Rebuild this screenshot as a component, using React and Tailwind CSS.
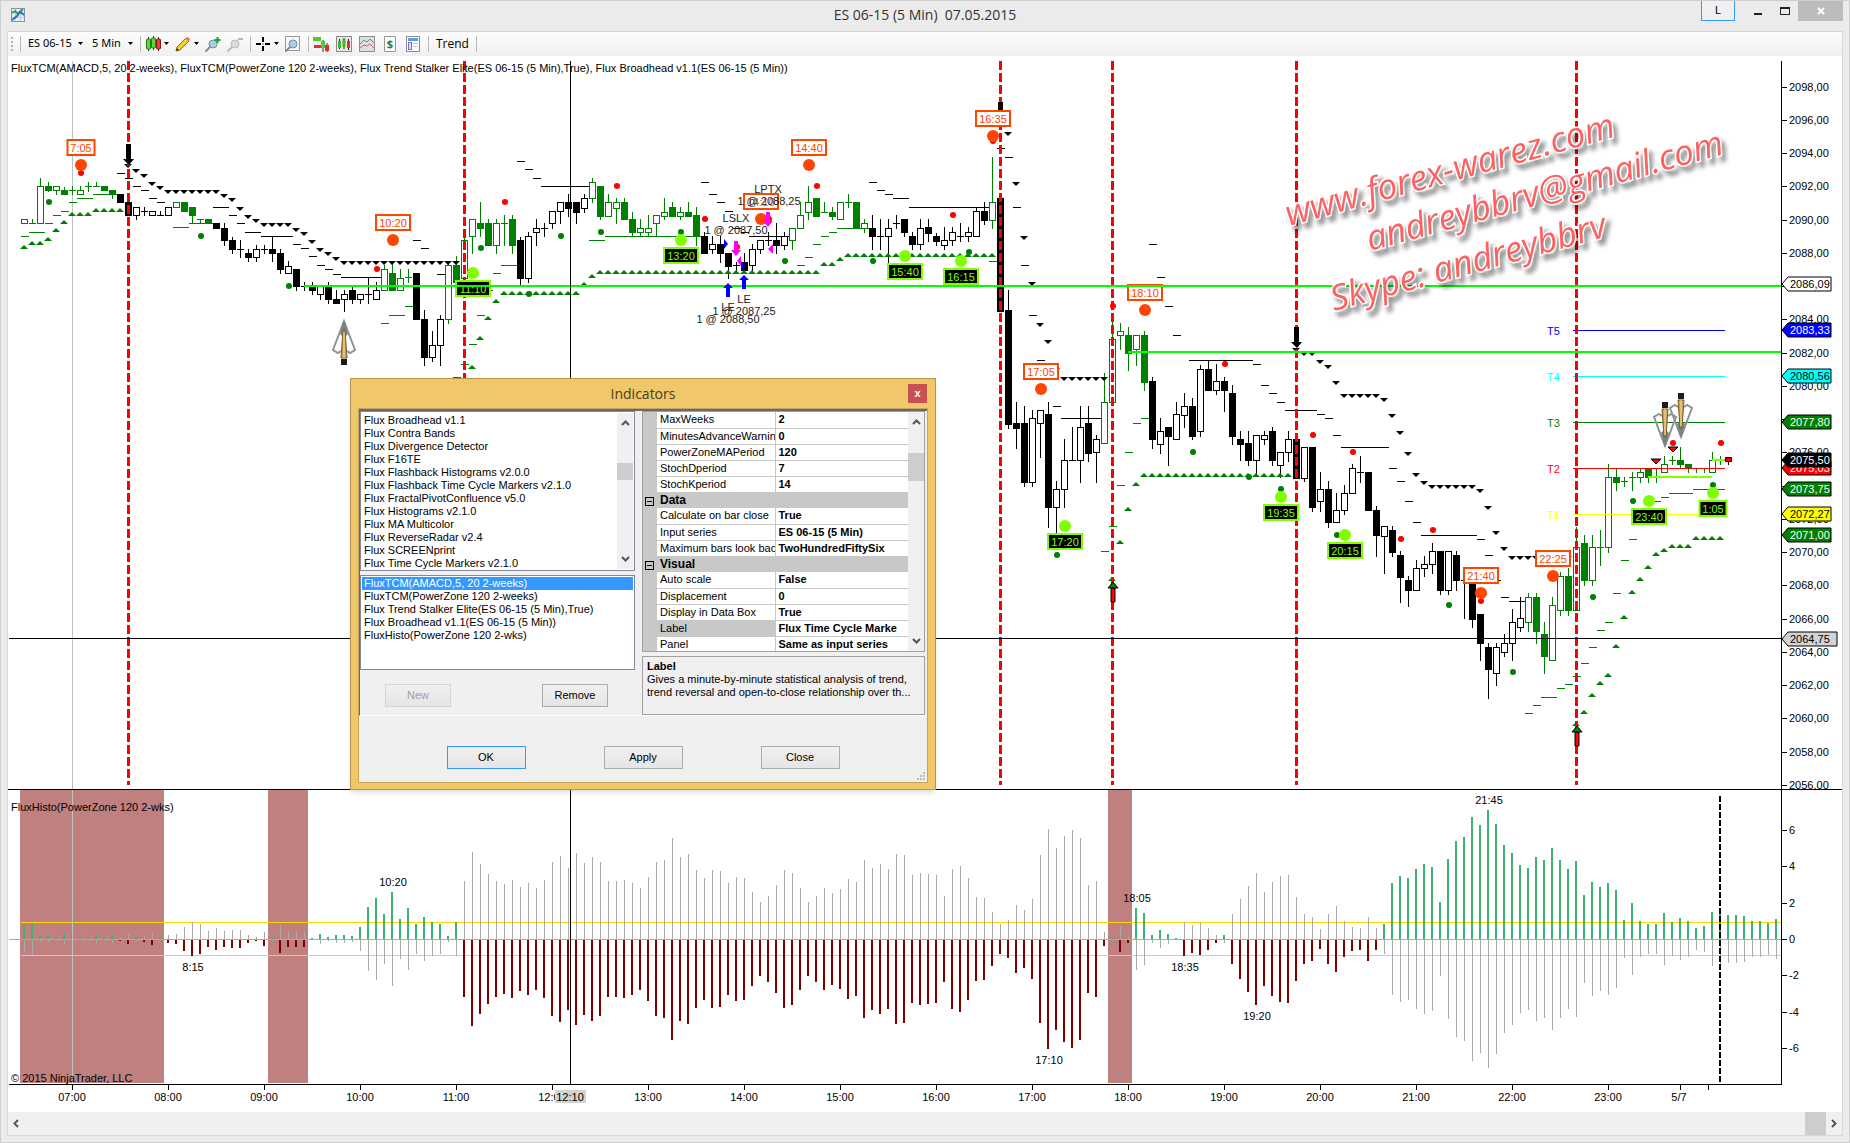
import { useState } from "react";

// -------------------------------------------------
// Chart geometry
// -------------------------------------------------
const FIRST_BAR = 24;
const BAR_STEP = 8;
const ZERO_Y = 939;

const barX = (i) => FIRST_BAR + i * BAR_STEP;

// one candle per 5 minutes: [high, body top, body bottom, low, kind]
// g = green hollow, G = green filled, w = black hollow, b = black filled
const candles = [
  [219, 219, 223, 223, "g"], [219, 223, 223, 223, "g"], [178, 186, 223, 223, "g"], [182, 186, 190, 191, "G"],
  [186, 186, 190, 194, "g"], [187, 190, 194, 194, "G"], [186, 190, 190, 194, "g"], [186, 190, 194, 194, "g"],
  [182, 186, 186, 191, "g"], [182, 186, 186, 186, "g"], [186, 186, 190, 190, "G"], [190, 190, 194, 198, "G"],
  [194, 194, 202, 202, "b"], [202, 202, 215, 215, "b"], [207, 207, 215, 219, "w"], [207, 211, 211, 215, "w"],
  [211, 211, 215, 215, "w"], [211, 215, 215, 215, "w"], [207, 207, 215, 215, "w"], [202, 202, 207, 207, "g"],
  [202, 202, 211, 211, "G"], [207, 207, 215, 223, "G"], [219, 219, 219, 223, "g"], [219, 219, 223, 223, "G"],
  [223, 223, 228, 228, "b"], [223, 228, 240, 245, "b"], [237, 240, 249, 253, "b"], [240, 249, 249, 257, "w"],
  [249, 253, 257, 261, "b"], [245, 249, 257, 261, "w"], [245, 249, 249, 253, "w"], [237, 249, 253, 261, "b"],
  [249, 253, 269, 273, "b"], [261, 266, 273, 273, "w"], [269, 269, 286, 290, "b"], [282, 286, 286, 290, "w"],
  [282, 286, 290, 294, "b"], [286, 286, 294, 299, "w"], [282, 286, 299, 303, "b"], [290, 299, 303, 303, "b"],
  [290, 294, 299, 311, "w"], [286, 290, 299, 303, "b"], [294, 294, 299, 303, "w"], [278, 294, 294, 303, "w"],
  [282, 290, 299, 299, "w"], [265, 269, 290, 290, "g"], [262, 273, 290, 290, "G"], [269, 278, 290, 290, "g"],
  [269, 277, 277, 282, "g"], [273, 273, 319, 319, "b"], [310, 319, 357, 365, "b"], [331, 345, 357, 361, "w"],
  [315, 319, 345, 365, "w"], [262, 265, 319, 323, "g"], [256, 265, 282, 282, "G"], [236, 240, 278, 278, "g"],
  [219, 219, 236, 253, "g"], [202, 223, 228, 236, "G"], [219, 223, 245, 245, "G"], [219, 223, 245, 253, "g"],
  [215, 223, 223, 245, "g"], [215, 219, 245, 253, "G"], [237, 240, 278, 286, "b"], [232, 236, 278, 282, "w"],
  [219, 228, 232, 245, "w"], [223, 228, 228, 236, "w"], [211, 211, 223, 228, "w"], [202, 202, 211, 223, "w"],
  [194, 202, 208, 216, "b"], [202, 202, 212, 223, "b"], [194, 198, 208, 212, "w"], [178, 182, 198, 202, "g"],
  [186, 186, 216, 219, "G"], [194, 202, 216, 216, "g"], [198, 202, 208, 223, "g"], [198, 202, 219, 219, "G"],
  [212, 219, 232, 236, "G"], [219, 228, 232, 236, "g"], [215, 228, 232, 236, "g"], [215, 215, 223, 236, "g"],
  [198, 212, 216, 219, "g"], [202, 207, 216, 216, "G"], [207, 212, 216, 219, "g"], [202, 212, 216, 216, "G"],
  [207, 215, 236, 245, "G"], [232, 236, 253, 253, "b"], [236, 244, 249, 253, "w"], [236, 244, 253, 262, "b"],
  [253, 253, 266, 278, "b"], [262, 265, 265, 273, "w"], [253, 262, 270, 270, "b"], [244, 249, 265, 270, "w"],
  [240, 240, 249, 253, "w"], [232, 240, 240, 245, "w"], [223, 240, 245, 253, "b"], [232, 236, 245, 249, "w"],
  [228, 228, 240, 249, "g"], [202, 215, 228, 228, "g"], [186, 202, 212, 219, "g"], [198, 198, 216, 216, "G"],
  [202, 212, 212, 212, "g"], [207, 212, 216, 219, "G"], [202, 202, 219, 219, "g"], [194, 202, 202, 207, "g"],
  [202, 202, 228, 228, "G"], [219, 223, 228, 232, "g"], [215, 228, 236, 249, "b"], [219, 236, 236, 249, "w"],
  [219, 228, 236, 262, "w"], [215, 223, 223, 228, "w"], [219, 219, 232, 236, "b"], [232, 236, 244, 249, "b"],
  [219, 228, 244, 249, "w"], [219, 227, 233, 241, "b"], [233, 236, 241, 245, "b"], [227, 240, 245, 249, "w"],
  [227, 232, 240, 245, "w"], [223, 236, 236, 241, "w"], [227, 232, 236, 241, "w"], [208, 211, 236, 236, "w"],
  [202, 211, 220, 224, "b"], [157, 202, 220, 228, "g"], [198, 198, 311, 311, "b"], [290, 310, 424, 428, "b"],
  [402, 423, 428, 448, "b"], [406, 423, 482, 486, "b"], [410, 418, 482, 486, "w"], [410, 410, 423, 457, "w"],
  [402, 414, 507, 527, "b"], [481, 489, 507, 532, "w"], [439, 460, 489, 507, "w"], [427, 460, 460, 460, "w"],
  [406, 427, 460, 482, "w"], [406, 423, 453, 461, "b"], [435, 439, 452, 482, "w"], [373, 402, 443, 443, "g"],
  [319, 339, 402, 402, "g"], [323, 331, 335, 349, "g"], [327, 335, 353, 370, "G"], [335, 335, 349, 365, "g"],
  [331, 335, 382, 390, "G"], [377, 381, 439, 448, "b"], [418, 431, 444, 453, "w"], [427, 427, 436, 465, "b"],
  [402, 414, 439, 439, "w"], [393, 406, 415, 427, "w"], [398, 406, 436, 439, "b"], [365, 369, 431, 436, "w"],
  [361, 369, 390, 390, "b"], [364, 381, 390, 394, "w"], [377, 381, 390, 411, "b"], [385, 393, 436, 444, "b"],
  [431, 439, 444, 460, "b"], [431, 443, 460, 465, "b"], [435, 435, 460, 473, "w"], [431, 435, 439, 444, "w"],
  [427, 431, 460, 465, "b"], [452, 452, 465, 477, "w"], [431, 439, 452, 461, "w"], [439, 439, 478, 478, "b"],
  [447, 447, 478, 481, "w"], [447, 447, 507, 511, "b"], [472, 489, 501, 511, "w"], [481, 489, 522, 527, "b"],
  [493, 510, 522, 522, "w"], [485, 493, 510, 514, "w"], [464, 468, 493, 493, "w"], [456, 472, 472, 482, "w"],
  [472, 472, 510, 510, "b"], [506, 510, 535, 556, "b"], [526, 526, 536, 573, "w"], [526, 530, 552, 556, "b"],
  [551, 555, 577, 602, "b"], [576, 580, 590, 606, "b"], [560, 568, 590, 590, "w"], [556, 564, 568, 576, "w"],
  [543, 551, 564, 573, "w"], [551, 551, 590, 594, "b"], [551, 551, 590, 594, "w"], [551, 555, 580, 590, "b"],
  [580, 580, 580, 618, "w"], [580, 580, 619, 627, "b"], [614, 614, 643, 660, "b"], [643, 647, 669, 698, "b"],
  [643, 647, 673, 685, "w"], [634, 643, 652, 656, "w"], [609, 622, 643, 660, "w"], [597, 618, 627, 631, "w"],
  [593, 597, 622, 631, "g"], [593, 597, 631, 643, "G"], [622, 634, 656, 673, "G"], [597, 605, 660, 660, "g"],
  [572, 576, 610, 615, "g"], [568, 576, 610, 615, "G"], [527, 547, 610, 610, "g"], [535, 543, 580, 585, "G"],
  [535, 547, 580, 585, "g"], [530, 547, 547, 565, "g"], [464, 477, 547, 552, "g"], [468, 477, 482, 490, "G"],
  [477, 481, 481, 486, "g"], [472, 477, 477, 490, "g"], [468, 472, 477, 482, "g"], [468, 468, 477, 482, "G"],
  [468, 477, 477, 482, "g"], [456, 464, 472, 472, "g"], [456, 460, 460, 464, "g"], [447, 460, 464, 468, "G"],
  [464, 464, 468, 472, "G"], [468, 468, 468, 472, "g"], [468, 468, 468, 472, "g"], [452, 460, 472, 472, "g"],
  [456, 460, 460, 464, "g"],
];

// histogram height of every bar, negative ones hang below zero
const histogram = [
  14, 16, 3, 3, 2, 5, 4, 1, 2, 4, 2, 4, -2, -5, 2, -3, -6, 1, -4, -5,
  -12, -17, -15, -8, -11, -8, -9, -9, -4, -2, -7, 2, -14, -8, -8, -8, 1, 5, 2, 4,
  4, 3, 12, 32, 41, 25, 47, 20, 31, 15, 22, 17, 15, 3, 17, -58, -87, -75, -65, -58,
  -55, -59, -52, -56, -51, -59, -77, -83, -71, -86, -76, -82, -77, -58, -58, -59, -56, -51, -62, -77,
  -79, -101, -82, -85, -69, -61, -69, -68, -56, -62, -61, -47, -37, -43, -54, -69, -66, -51, -37, -43,
  -51, -46, -50, -60, -57, -79, -71, -75, -70, -85, -84, -64, -66, -65, -64, -43, -70, -73, -61, -42,
  -41, -27, -15, -19, -34, -29, -40, -84, -110, -91, -103, -109, -101, -54, -58, -7, 2, -13, -4, 31,
  26, 4, 9, 5, 1, -17, -14, -16, -11, -4, 4, -25, -40, -53, -66, -47, -57, -63, -64, -42,
  -25, -22, -10, -25, -33, -18, -12, -11, -22, -11, 15, 56, 63, 61, 70, 75, 72, 37, 80, 98,
  102, 122, 114, 129, 115, 94, 86, 74, 71, 82, 79, 91, 79, 70, 78, 44, 57, 52, 56, 49,
  19, 36, 18, 15, 15, 26, 17, 21, 18, 11, 13, 27, 30, 24, 24, 23, 18, 18, 16, 20,
];

// trailing stop triangles: [bar, y]; a third value repeats up to that bar
const stopsDown = [
  [13, 166], [14, 171], [15, 176], [16, 184], [17, 188], [18, 192, 24], [25, 196], [26, 200], [27, 209],
  [28, 217], [29, 221], [30, 225, 33], [34, 230], [35, 234], [36, 242], [37, 250], [38, 254], [39, 259],
  [40, 263, 54], [123, 134], [124, 184], [125, 238], [126, 284], [127, 325], [128, 342], [129, 370],
  [130, 379, 135], [159, 350], [160, 354, 161], [162, 362], [163, 367], [164, 383], [165, 396, 169],
  [170, 400], [171, 416], [172, 433], [173, 454], [174, 475], [175, 483], [176, 487, 181], [182, 491],
  [183, 508], [184, 533], [185, 549], [186, 558, 193],
];
const stopsUp = [
  [0, 247], [1, 243, 2], [3, 239], [4, 230], [5, 222], [6, 214, 8], [9, 210, 12], [56, 367], [57, 338],
  [58, 318], [59, 301], [60, 293, 69], [70, 284], [71, 276], [72, 272, 99], [100, 264, 101], [102, 259],
  [103, 255, 121], [136, 579], [137, 542], [138, 509], [139, 484], [140, 475, 158], [194, 724], [195, 712],
  [196, 695], [197, 683], [198, 675], [199, 646], [200, 617], [201, 592], [202, 579], [203, 567],
  [204, 554], [205, 550], [206, 546, 208], [209, 538, 212],
];

// fast stop dashes: same shape as above
const dashesBlack = [
  [12, 173], [13, 178], [14, 186], [15, 190], [16, 198], [17, 202], [24, 207, 25], [26, 215], [27, 223],
  [28, 232, 29], [30, 236, 33], [34, 244], [35, 248], [36, 256], [37, 265], [38, 269], [39, 274],
  [40, 277, 44], [49, 240], [50, 248], [52, 274], [62, 161], [63, 169], [64, 178], [65, 186, 70],
  [85, 182], [86, 194], [87, 202], [88, 211], [89, 228], [90, 232], [91, 236, 95], [106, 182], [107, 190],
  [108, 194], [109, 198, 110], [111, 207, 120], [122, 148], [123, 157], [124, 207], [125, 265], [126, 315],
  [127, 360], [129, 406], [130, 418, 134], [141, 244], [142, 277], [143, 306], [144, 335], [146, 360, 153],
  [154, 364], [155, 385], [156, 393], [157, 402], [158, 410, 161], [162, 414], [163, 418], [164, 435],
  [165, 447, 170], [171, 468], [172, 481], [173, 501], [174, 522], [175, 535, 181], [182, 539], [183, 555],
  [184, 580], [185, 597], [186, 601, 187],
];
const dashesGreen = [
  [0, 236], [1, 232, 2], [3, 223], [4, 215], [5, 211], [6, 202], [7, 198, 8], [9, 194, 11], [19, 227, 20],
  [21, 223, 23], [45, 323], [46, 315, 47], [48, 306], [54, 377], [55, 364], [56, 344], [57, 315],
  [58, 290], [59, 273], [60, 265, 61], [71, 240, 72], [73, 236, 84], [97, 265], [98, 257], [99, 244],
  [100, 236], [101, 232], [102, 228, 105], [121, 261], [135, 551], [136, 526], [137, 485], [138, 452],
  [139, 423], [140, 418], [188, 713], [189, 705], [190, 697, 191], [192, 688], [193, 684], [194, 676],
  [195, 663], [196, 647], [197, 630], [198, 622], [199, 593], [200, 560], [201, 539], [204, 501],
  [205, 497], [206, 493, 208], [209, 489, 212],
];

const greenDots = [
  [49, 202], [201, 236], [289, 286], [481, 248], [561, 236], [601, 232], [681, 232], [785, 261], [873, 261],
  [529, 294], [969, 252], [1193, 452], [1249, 477], [1281, 489], [1337, 535], [1057, 555], [1449, 605],
  [1513, 672], [1593, 597], [1633, 501], [1713, 485],
];
const redDots = [
  [81, 173], [377, 269], [505, 202], [617, 186], [705, 219], [817, 186], [737, 247], [769, 219], [953, 215],
  [993, 141], [1113, 306], [1225, 364], [1313, 435], [1353, 452], [1401, 539], [1433, 530], [1481, 601],
  [1673, 443], [1721, 443],
];

const sellTimes = [
  ["7:05", 81, 165], ["10:20", 393, 240], ["14:40", 809, 165], ["14:10", 761, 219], ["16:35", 993, 136],
  ["17:05", 1041, 389], ["18:10", 1145, 310], ["21:40", 1481, 593], ["22:25", 1553, 576],
];
const buyTimes = [
  ["11:10", 473, 273], ["13:20", 681, 240], ["15:40", 905, 256], ["16:15", 961, 261], ["17:20", 1065, 526],
  ["19:35", 1281, 497], ["20:15", 1345, 535], ["23:40", 1649, 501], ["1:05", 1713, 493],
];

const trendLines = [128, 464, 1000, 1112, 1296, 1576];

const targets = [
  ["T5", 330, "#0000ff"],
  ["T4", 376, "#00ffff"],
  ["T3", 422, "#008000"],
  ["T2", 468, "#ff0000"],
  ["T1", 514, "#ffff00"],
];

const priceTags = [
  ["2086,09", 284, "#ffffff", "#000000"],
  ["2083,33", 330, "#0000ff", "#ffffff"],
  ["2080,56", 376, "#00ffff", "#000000"],
  ["2077,80", 422, "#008000", "#ffffff"],
  ["2075,03", 468, "#ff0000", "#ffffff"],
  ["2075,50", 460, "#000000", "#ffffff"],
  ["2073,75", 489, "#008000", "#ffffff"],
  ["2072,27", 514, "#ffff00", "#000000"],
  ["2071,00", 535, "#008000", "#ffffff"],
];

const trades = [
  ["LPTX", 768, 193], ["1 @ 2088,25", 769, 205], ["LSLX", 736, 222], ["1 @ 2087,50", 736, 234],
  ["LE", 744, 303], ["1 @ 2087,25", 744, 315], ["LE", 728, 311], ["1 @ 2088,50", 728, 323],
];

const hours = [
  "07:00", "08:00", "09:00", "10:00", "11:00", "12:00", "13:00", "14:00", "15:00",
  "16:00", "17:00", "18:00", "19:00", "20:00", "21:00", "22:00", "23:00",
];

const histLabels = [
  ["10:20", 393, 886], ["8:15", 193, 971], ["18:05", 1137, 902], ["18:35", 1185, 971],
  ["17:10", 1049, 1064], ["19:20", 1257, 1020], ["21:45", 1489, 804],
];

const expand = (runs) =>
  runs.flatMap(([from, y, to = from]) =>
    Array.from({ length: to - from + 1 }, (_, n) => [barX(from + n), y])
  );

// -------------------------------------------------
// Chart pieces
// -------------------------------------------------
function Candle({ x, candle }) {
  const [high, top, bottom, low, kind] = candle;
  const color = kind === "g" || kind === "G" ? "#008000" : "#000000";
  const cx = x + 0.5;
  if (top === bottom) {
    return (
      <path d={`M${cx} ${high}V${low + 1}M${x - 3} ${top + 0.5}h7`} stroke={color} />
    );
  }
  const filled = kind === "G" || kind === "b";
  return (
    <g stroke={color}>
      <path d={`M${cx} ${high}V${top}M${cx} ${bottom}V${low + 1}`} />
      <rect
        x={x - 3 + 0.5}
        y={top + 0.5}
        width={6}
        height={bottom - top}
        fill={filled ? color : "#ffffff"}
      />
    </g>
  );
}

function TimeMarker({ label, x, y, sell }) {
  const width = label.length > 4 ? 34 : 27;
  const color = sell ? "#ff4500" : "#7fff00";
  const boxY = sell ? y - 25 : y + 8;
  return (
    <g>
      <circle cx={x} cy={y} r={6} fill={color} />
      <rect
        x={x - width / 2}
        y={boxY}
        width={width}
        height={15}
        fill={sell ? "#ffffff" : "#000000"}
        stroke={color}
        strokeWidth={2}
      />
      <text x={x} y={boxY + 12} textAnchor="middle" fill={color}>
        {label}
      </text>
    </g>
  );
}

function PriceTag({ label, y, fill, color, width = 48 }) {
  return (
    <g>
      <path
        d={`M1782 ${y}l6 -7h${width - 5}v14h-${width - 5}z`}
        fill={fill}
        stroke="#000000"
      />
      <text x={1790} y={y + 4} fill={color}>
        {label}
      </text>
    </g>
  );
}

function Broadhead({ x, y, down }) {
  return (
    <g transform={`translate(${x} ${y})${down ? " rotate(180)" : ""}`}>
      <path d="M0 -21L-11 8L-6 11L-3 9M0 -21L11 8L6 11L3 9" fill="none" stroke="#8d9499" strokeWidth={2} />
      <path d="M0 -24L-4 -8L-2 -6L0 -12L2 -6L4 -8z" fill="#7b8388" />
      <path d="M-1 -12h2l1 14l1 14h-6l1 -14z" fill="#c9a25a" stroke="#7a5a22" />
      <path d="M0 -10v26" stroke="#f3dda2" />
      <rect x={-3} y={17} width={6} height={6} fill="#1c1c1c" />
    </g>
  );
}

function Chart() {
  return (
    <svg
      viewBox="8 56 1834 1056"
      className="block w-full bg-white font-['Liberation_Sans',Arial,sans-serif] text-[11px]"
    >
      {/* power zones */}
      <g fill="#c08080">
        <rect x={20} y={790} width={144} height={293} />
        <rect x={268} y={790} width={40} height={293} />
        <rect x={1108} y={790} width={24} height={293} />
      </g>

      {/* histogram */}
      <g shapeRendering="crispEdges">
        <path d="M21 922.5H1781M21 955.5H1781" stroke="#ffd700" />
        {histogram.map((value, i) => (
          <path
            key={i}
            d={`M${barX(i) + 0.5} ${ZERO_Y}V${ZERO_Y + value}`}
            stroke="#a9a9a9"
          />
        ))}
        {histogram.map((value, i) => (
          <path
            key={i}
            d={`M${barX(i)} ${ZERO_Y}V${ZERO_Y - value}`}
            stroke={value > 0 ? "#3cb371" : "#800000"}
            strokeWidth={2}
          />
        ))}
        <path d="M9 939.5H1781" stroke="#a9a9a9" />
        <path d="M1720 796V1083" stroke="#000000" strokeWidth={2} strokeDasharray="6 2" />
        <path d="M72.5 61V1083" stroke="#c0c0c0" />
      </g>

      {/* stops and candles */}
      <g shapeRendering="crispEdges">
        {expand(dashesGreen).map(([x, y]) => (
          <path key={x} d={`M${x - 3} ${y + 0.5}h8`} stroke="#008000" />
        ))}
        {expand(dashesBlack).map(([x, y]) => (
          <path key={x} d={`M${x - 3} ${y + 0.5}h8`} stroke="#000000" />
        ))}
        {candles.map((candle, i) => (
          <Candle key={i} x={barX(i)} candle={candle} />
        ))}
      </g>
      {expand(stopsDown).map(([x, y]) => (
        <path key={x} d={`M${x - 4} ${y - 2}h8l-4 4z`} fill="#000000" />
      ))}
      {expand(stopsUp).map(([x, y]) => (
        <path key={x} d={`M${x - 4} ${y + 2}h8l-4 -4z`} fill="#008000" />
      ))}

      {/* swing dots */}
      {greenDots.map(([x, y]) => (
        <circle key={x} cx={x} cy={y} r={3} fill="#008000" />
      ))}
      {redDots.map(([x, y]) => (
        <circle key={x} cx={x} cy={y} r={3} fill="#ff0000" />
      ))}

      {/* targets */}
      {targets.map(([label, y, color]) => (
        <g key={label}>
          <path d={`M1573 ${y + 0.5}H1725`} stroke={color} />
          <text x={1547} y={y + 5} fill={color}>
            {label}
          </text>
        </g>
      ))}
      <path d="M1648 477H1712M1712 460H1728" stroke="#7fff00" strokeWidth={2} />
      <path d="M1651 459h10l-5 5zM1668 447h10l-5 5z" fill="#ff0000" stroke="#000000" />
      <path d="M1725.5 457.5h6v4h-6zM1728.5 461v4" fill="#ff0000" stroke="#000000" />

      {/* trend changes */}
      {trendLines.map((x) => (
        <path
          key={x}
          d={`M${x + 0.5} 61V785`}
          stroke="#ff0000"
          strokeWidth={3}
          strokeDasharray="9 3"
        />
      ))}
      <path d="M126 144h5v15h3l-5 6l-6 -6h3z" fill="#000000" />
      <path d="M1294 327h5v15h3l-5 6l-6 -6h3z" fill="#000000" />
      <path d="M998 102h5v10h-5z" fill="#000000" />
      {[
        [1112, 583],
        [1576, 727],
      ].map(([x, y]) => (
        <g key={x}>
          <path d={`M${x - 1} ${y + 5}h4v14h-4z`} fill="#ff0000" stroke="#000000" />
          <path d={`M${x - 4} ${y + 5}h10l-5 -6z`} fill="#008000" stroke="#000000" />
        </g>
      ))}

      {sellTimes.map(([label, x, y]) => (
        <TimeMarker key={label} label={label} x={x} y={y} sell />
      ))}
      {buyTimes.map(([label, x, y]) => (
        <TimeMarker key={label} label={label} x={x} y={y} />
      ))}

      <path d="M304 286H1781M1128 352H1781" stroke="#00ff00" strokeWidth={2} />

      {/* executions */}
      <path d="M728 283l5 5h-3v9h-4v-9h-3zM744 275l5 5h-3v9h-4v-9h-3zM724 239v10l4 -5zM741 261v10l4 -5z" fill="#0000ff" />
      <path d="M736 256l5 -6h-3v-9h-4v9h-3zM768 227l5 -6h-3v-9h-4v9h-3zM773 244v10l-5 -5zM741 256v10l-4 -5z" fill="#ff00ff" />
      <g fill="#1a1a1a" textAnchor="middle">
        {trades.map(([label, x, y]) => (
          <text key={label + x} x={x} y={y}>
            {label}
          </text>
        ))}
      </g>

      <Broadhead x={344} y={342} />
      <Broadhead x={1665} y={425} down />
      <Broadhead x={1681} y={416} down />

      {/* panel captions */}
      <text x={11} y={72}>
        FluxTCM(AMACD,5, 20 2-weeks), FluxTCM(PowerZone 120 2-weeks), Flux Trend Stalker Elite(ES 06-15 (5 Min),True), Flux Broadhead v1.1(ES 06-15 (5 Min))
      </text>
      <text x={11} y={811}>
        FluxHisto(PowerZone 120 2-wks)
      </text>
      <text x={11} y={1082}>
        © 2015 NinjaTrader, LLC
      </text>
      <g textAnchor="middle">
        {histLabels.map(([label, x, y]) => (
          <text key={label} x={x} y={y}>
            {label}
          </text>
        ))}
      </g>

      {/* crosshair and panel frames */}
      <g shapeRendering="crispEdges" stroke="#000000" fill="none">
        <path d="M570.5 61V1084M9 638.5H1781" />
        <path d="M8 789.5H1842M9 1084.5H1781.5V61" />
        {hours.map((hour, i) => (
          <path key={hour} d={`M${72.5 + i * 96} 1084v6`} />
        ))}
        <path d="M1680.5 1084v6M1708.5 1084v6" />
      </g>

      {/* time axis */}
      <g textAnchor="middle">
        {hours.map((hour, i) => (
          <text key={hour} x={72 + i * 96} y={1101}>
            {hour}
          </text>
        ))}
        <text x={1679} y={1101}>
          5/7
        </text>
        <rect x={555} y={1090} width={31} height={13} fill="#d3d3d3" />
        <text x={570} y={1101}>
          12:10
        </text>
      </g>

      {/* price axis */}
      {Array.from({ length: 22 }, (_, i) => {
        const y = Math.round(86.7 + i * 33.24);
        return (
          <g key={i}>
            <path d={`M1781 ${y + 0.5}h6`} stroke="#000000" />
            <text x={1789} y={y + 4}>
              {2098 - i * 2},00
            </text>
          </g>
        );
      })}
      {[6, 4, 2, 0, -2, -4, -6].map((value) => {
        const y = Math.round(ZERO_Y - value * 18.2);
        return (
          <g key={value}>
            <path d={`M1781 ${y + 0.5}h6`} stroke="#000000" />
            <text x={1789} y={y + 4}>
              {value}
            </text>
          </g>
        );
      })}
      {priceTags.map(([label, y, fill, color]) => (
        <PriceTag key={label} label={label} y={y} fill={fill} color={color} />
      ))}
      <PriceTag label="2064,75" y={639} fill="#d3d3d3" color="#000000" width={54} />

      {/* stamp */}
      <g
        className="font-['Open_Sans','Noto_Sans',sans-serif] text-[35px] font-medium italic drop-shadow-[4px_5px_2px_rgba(0,0,0,0.4)]"
        fill="#ff6060"
        stroke="#ffffff"
        strokeWidth={3}
        paintOrder="stroke"
      >
        <text transform="translate(1289 226) rotate(-15.3)">www.forex-warez.com</text>
        <text transform="translate(1370 251) rotate(-15.3)">andreybbrv@gmail.com</text>
        <text transform="translate(1334 311) rotate(-15.3)">Skype: andreybbrv</text>
      </g>
    </svg>
  );
}

// -------------------------------------------------
// Indicators dialog
// -------------------------------------------------
const available = [
  "Flux Broadhead v1.1", "Flux Contra Bands", "Flux Divergence Detector", "Flux F16TE",
  "Flux Flashback Histograms v2.0.0", "Flux Flashback Time Cycle Markers v2.1.0",
  "Flux FractalPivotConfluence v5.0", "Flux Histograms v2.1.0", "Flux MA Multicolor",
  "Flux ReverseRadar v2.4", "Flux SCREENprint", "Flux Time Cycle Markers v2.1.0",
];
const applied = [
  "FluxTCM(AMACD,5, 20 2-weeks)", "FluxTCM(PowerZone 120 2-weeks)",
  "Flux Trend Stalker Elite(ES 06-15 (5 Min),True)", "Flux Broadhead v1.1(ES 06-15 (5 Min))",
  "FluxHisto(PowerZone 120 2-wks)",
];
const properties = [
  ["MaxWeeks", "2"], ["MinutesAdvanceWarning", "0"], ["PowerZoneMAPeriod", "120"], ["StochDperiod", "7"],
  ["StochKperiod", "14"], ["Data"], ["Calculate on bar close", "True"], ["Input series", "ES 06-15 (5 Min)"],
  ["Maximum bars look back", "TwoHundredFiftySix"], ["Visual"], ["Auto scale", "False"], ["Displacement", "0"],
  ["Display in Data Box", "True"], ["Label", "Flux Time Cycle Marke"], ["Panel", "Same as input series"],
];

function Chevron({ className }) {
  return (
    <svg viewBox="0 0 9 9" className={`size-[9px] ${className}`}>
      <path d="M1 6L4.5 2.5L8 6" fill="none" stroke="#555555" strokeWidth={2} />
    </svg>
  );
}

function ScrollBar({ thumb }) {
  return (
    <div className="flex w-4 shrink-0 flex-col items-center justify-between bg-[#f0f0f0] py-[6px]">
      <button type="button" aria-label="Scroll up">
        <Chevron className="block" />
      </button>
      <div className="flex w-full flex-1 flex-col">
        <div className={`w-full bg-[#cdcdcd] ${thumb}`} />
      </div>
      <button type="button" aria-label="Scroll down">
        <Chevron className="block rotate-180" />
      </button>
    </div>
  );
}

function DialogButton({ children, className, disabled }) {
  return (
    <button
      type="button"
      disabled={disabled}
      className={`h-[23px] border bg-linear-to-b from-[#f0f0f0] to-[#e5e5e5] text-center ${className}`}
    >
      {children}
    </button>
  );
}

function IndicatorsDialog() {
  const [selected, setSelected] = useState(0);

  return (
    <div
      role="dialog"
      aria-labelledby="dialog-title"
      className="absolute top-[322px] left-[342px] flex w-[586px] flex-col border border-[#b8954c] bg-[#f0c869] px-[7px] pb-[6px] font-['Liberation_Sans',Arial,sans-serif] text-[11px] leading-[13px] shadow-md"
    >
      <div className="relative flex h-[29px] items-center justify-center">
        <h2 id="dialog-title" className="font-['Open_Sans','Noto_Sans',sans-serif] text-[14px] text-[#4a3c1c]">
          Indicators
        </h2>
        <button
          type="button"
          aria-label="Close dialog"
          className="absolute top-[5px] right-px h-[19px] w-[19px] bg-[#c75050] text-[11px] font-bold text-white"
        >
          x
        </button>
      </div>

      <div className="border border-[#c9a557] bg-[#f0f0f0]">
        <div className="flex justify-between border-b border-b-white border-t-2 border-t-[#696969] border-l border-l-[#696969] pr-[2px]">
          <div className="flex w-[275px] flex-col">
            <div className="flex h-[160px] border border-[#82879b] bg-white py-px pr-px">
              <ul role="listbox" aria-label="Available indicators" className="flex-1 pt-px pl-[3px]">
                {available.map((name) => (
                  <li key={name} role="option" aria-selected="false">
                    {name}
                  </li>
                ))}
              </ul>
              <ScrollBar thumb="mt-[35px] h-[17px]" />
            </div>
            <ul
              role="listbox"
              aria-label="Applied indicators"
              className="mt-[4px] h-[95px] border border-[#82879b] bg-white p-px"
            >
              {applied.map((name, i) => (
                <li
                  key={name}
                  role="option"
                  aria-selected={i === selected}
                  onClick={() => setSelected(i)}
                  className={`pl-[2px] ${i === selected ? "bg-[#3399ff] text-white" : ""}`}
                >
                  {name}
                </li>
              ))}
            </ul>
            <div className="mt-[14px] flex justify-between pr-[27px] pl-[25px]">
              <DialogButton disabled className="w-[66px] border-[#d5d5d5] text-[#a0a0a0]">
                New
              </DialogButton>
              <DialogButton className="w-[66px] border-[#acacac]">Remove</DialogButton>
            </div>
          </div>

          <div className="flex w-[283px] flex-col">
            <div className="flex h-[241px] overflow-hidden border border-[#a0a0a0] bg-[#c8c8c8]">
              <div className="min-w-0 flex-1 pl-[14px]">
                <table className="w-full table-fixed border-collapse">
                  <tbody>
                    {properties.map(([name, value]) =>
                      value === undefined ? (
                        <tr key={name} className="h-4">
                          <th colSpan={2} className="relative pl-[3px] text-left text-[12px] font-bold">
                            <button
                              type="button"
                              aria-label={`Collapse ${name}`}
                              className="absolute top-[4px] -left-[12px] flex size-[9px] items-center justify-center border border-black"
                            >
                              <span className="h-px w-[5px] bg-black" />
                            </button>
                            {name}
                          </th>
                        </tr>
                      ) : (
                        <tr key={name} className="h-4 border-b border-[#c8c8c8]">
                          <th
                            scope="row"
                            className={`w-[118px] overflow-hidden border-r border-[#c8c8c8] pl-[3px] text-left font-normal whitespace-nowrap ${
                              name === "Label" ? "bg-[#c8c8c8]" : "bg-white"
                            }`}
                          >
                            {name}
                          </th>
                          <td className="overflow-hidden bg-white pl-[3px] font-bold whitespace-nowrap">
                            {value}
                          </td>
                        </tr>
                      )
                    )}
                  </tbody>
                </table>
              </div>
              <ScrollBar thumb="mt-[26px] h-[28px]" />
            </div>
            <div className="mt-[4px] h-[59px] border border-[#a0a0a0] px-[4px] py-[3px]">
              <h3 className="font-bold">Label</h3>
              <p className="whitespace-nowrap">
                Gives a minute-by-minute statistical analysis of trend,
                <br />
                trend reversal and open-to-close relationship over th...
              </p>
            </div>
          </div>
        </div>

        <div className="relative flex h-[66px] items-start justify-center gap-[78px] pt-[30px]">
          <DialogButton className="w-[79px] border-[#3399ff]">OK</DialogButton>
          <DialogButton className="w-[79px] border-[#acacac]">Apply</DialogButton>
          <DialogButton className="w-[79px] border-[#acacac]">Close</DialogButton>
          <svg viewBox="0 0 8 8" className="absolute right-[2px] bottom-[2px] size-2">
            <path d="M6 0h2v2h-2zM3 3h2v2h-2zM6 3h2v2h-2zM0 6h2v2h-2zM3 6h2v2h-2zM6 6h2v2h-2z" fill="#bdbdbd" />
          </svg>
        </div>
      </div>
    </div>
  );
}

// -------------------------------------------------
// Window chrome
// -------------------------------------------------
function Caret() {
  return (
    <svg viewBox="0 0 5 3" className="h-[3px] w-[5px]">
      <path d="M0 0h5L2.5 3z" fill="#000000" />
    </svg>
  );
}

function Separator() {
  return <span className="h-4 w-px bg-[#bdbdbd]" />;
}

function Icon({ children, label, caret }) {
  return (
    <button type="button" aria-label={label} className="flex items-center gap-[3px]">
      <svg viewBox="0 0 16 16" className="size-4">
        {children}
      </svg>
      {caret && <Caret />}
    </button>
  );
}

function Magnifier({ glass = "#a9cdea", rim = "#7d8b99" }) {
  return (
    <>
      <path d="M1 15L5 11" stroke={rim} strokeWidth={2} strokeLinecap="round" />
      <circle cx={8} cy={8} r={4} fill={glass} stroke={rim} />
    </>
  );
}

function Toolbar() {
  return (
    <div className="flex h-[25px] items-center border-t border-[#d5d5d5] bg-linear-to-b from-[#fdfdfd] to-[#f0f0f0] pb-px pl-[3px] font-['Open_Sans','Noto_Sans',sans-serif] text-[12px]">
      <svg viewBox="0 0 2 14" className="mr-[7px] h-[14px] w-[2px]">
        <path d="M1 0V14" stroke="#b5b5b5" strokeWidth={2} strokeDasharray="2 2" />
      </svg>
      <Separator />
      <button type="button" className="ml-[7px] flex w-[55px] items-center justify-between whitespace-nowrap">
        <span className="font-['Noto_Sans',sans-serif] text-[11px]">ES 06-15</span>
        <Caret />
      </button>
      <button type="button" className="ml-[9px] flex w-[41px] items-center justify-between whitespace-nowrap">
        <span className="font-['Noto_Sans',sans-serif] text-[11px]">5 Min</span>
        <Caret />
      </button>
      <div className="ml-[7px] flex items-center">
        <Separator />
      </div>
      <div className="ml-[4px] flex items-center gap-[6px]">
        <Icon label="Chart style" caret>
          <path d="M3.5 1v14M8.5 0v14M13.5 1v14" stroke="#333333" />
          <rect x={1.5} y={3} width={4} height={10} rx={1} fill="#5fd93a" stroke="#267a12" />
          <rect x={6.5} y={2} width={4} height={10} rx={1} fill="#5fd93a" stroke="#267a12" />
          <rect x={11.5} y={3} width={4} height={10} rx={1} fill="#e84040" stroke="#8f1616" />
        </Icon>
        <Icon label="Drawing tools" caret>
          <path d="M2 11L11 2l3 3l-9 9l-4 1z" fill="#f5cf2f" stroke="#8a6a10" />
          <path d="M11 2l3 3l1 -2l-2 -2z" fill="#e2737c" />
          <path d="M1 15l1 -3l2 2z" fill="#333333" />
        </Icon>
        <Icon label="Zoom in">
          <Magnifier />
          <path d="M12.5 1v6M9.5 4h6" stroke="#12a52c" strokeWidth={2} />
        </Icon>
        <Icon label="Zoom out">
          <Magnifier glass="#dcdcdc" rim="#b9b9b9" />
          <path d="M11 3h5" stroke="#b5b5b5" strokeWidth={2} />
        </Icon>
      </div>
      <div className="ml-[7px] flex items-center gap-[4px]">
        <Separator />
        <Icon label="Crosshair" caret>
          <path d="M8 1v5M8 10v5M1 8h5M10 8h5" stroke="#000000" strokeWidth={2} />
          <rect x={7.5} y={7.5} width={1} height={1} />
        </Icon>
      </div>
      <div className="ml-[6px] flex items-center gap-[7px]">
        <Icon label="Data window">
          <rect x={0.5} y={0.5} width={14} height={14} fill="#f7f7f7" stroke="#999999" />
          <Magnifier />
        </Icon>
        <div className="flex items-center gap-[4px]">
          <Separator />
          <Icon label="Chart trader">
            <path d="M10 4v12M14 7v9" stroke="#333333" />
            <rect x={0} y={1} width={8} height={4} fill="#55c733" />
            <rect x={1} y={9} width={7} height={3} fill="#dd2f2f" />
            <rect x={8} y={5} width={4} height={7} fill="#55c733" />
            <rect x={12} y={9} width={4} height={6} fill="#dd2f2f" />
          </Icon>
        </div>
        <Icon label="Data series">
          <rect x={0.5} y={0.5} width={15} height={15} fill="#e6e6e6" stroke="#8e8e8e" />
          <path d="M3.5 3v10M8 2v11M12.5 3v11" stroke="#222222" />
          <rect x={2} y={5} width={3} height={7} fill="#43b82b" />
          <rect x={6.5} y={3} width={3} height={8} fill="#43b82b" />
          <rect x={11} y={5} width={3} height={7} fill="#dd2f2f" />
        </Icon>
        <Icon label="Indicators">
          <rect x={0.5} y={0.5} width={15} height={15} fill="#dedede" stroke="#8e8e8e" />
          <path d="M1 8l4 -4l3 2l3 -3l4 4" fill="none" stroke="#3aa57a" />
          <path d="M1 12l4 -3l3 1l3 -2l4 4" fill="none" stroke="#d66565" />
        </Icon>
        <Icon label="Strategies">
          <path d="M2.5 0.5h11v15h-11z" fill="#ffffff" stroke="#999999" />
          <text x={8} y={12} textAnchor="middle" fill="#1e7d2b" fontSize={11} fontWeight="bold">
            $
          </text>
        </Icon>
        <Icon label="Properties">
          <rect x={1.5} y={0.5} width={13} height={15} fill="#ffffff" stroke="#8e8e8e" />
          <rect x={3} y={2} width={10} height={3} fill="#5b9be0" />
          <rect x={3.5} y={6.5} width={3} height={7} fill="#e4dcff" stroke="#7d6be0" />
          <path d="M8 7.5h5M8 10.5h5" stroke="#c5c5c5" />
        </Icon>
        <Separator />
        <button type="button">Trend</button>
        <Separator />
      </div>
    </div>
  );
}

function TitleBar() {
  return (
    <header className="relative flex h-[30px] items-start justify-between pl-[4px]">
      <svg viewBox="0 0 14 14" className="mt-[7px] size-[14px]">
        <rect x={0.5} y={0.5} width={13} height={13} fill="#e9edf7" stroke="#8d8fb5" />
        <path d="M1 4.5h12M1 9.5h12M4.5 1v12M9.5 1v12" stroke="#c3c8dd" />
        <path d="M1 5l3 -2l3 3l5 -5" fill="none" stroke="#2eaa33" strokeWidth={2} />
        <path d="M1 12l5 -4l3 -4l4 3" fill="none" stroke="#2b6fc9" strokeWidth={2} />
      </svg>
      <h1 className="absolute inset-x-0 top-[4px] text-center font-['Open_Sans','Noto_Sans',sans-serif] text-[14px] leading-[20px] text-[#333333]">
        ES 06-15 (5 Min)&nbsp; 07.05.2015
      </h1>
      <div className="relative flex items-start">
        <button
          type="button"
          className="mr-[19px] h-[20px] w-[34px] border border-t-0 border-[#3399ff] bg-[#f0f0f0] font-['Liberation_Sans',Arial,sans-serif] text-[11px]"
        >
          L
        </button>
        <button type="button" aria-label="Minimize" className="mt-[12px] mr-[18px] h-[2px] w-[8px] bg-[#222222]" />
        <button
          type="button"
          aria-label="Maximize"
          className="mt-[6px] mr-[8px] h-[8px] w-[10px] border border-t-2 border-[#222222]"
        />
        <button
          type="button"
          aria-label="Close"
          className="flex h-[20px] w-[45px] items-center justify-center bg-[#bcbcbc]"
        >
          <svg viewBox="0 0 8 8" className="size-2">
            <path d="M1 1L7 7M7 1L1 7" stroke="#ffffff" strokeWidth={2} />
          </svg>
        </button>
      </div>
    </header>
  );
}

function App() {
  return (
    <div className="flex min-h-screen flex-col border border-[#cfcfcf] bg-[#ebebeb] px-[6px] text-black">
      <TitleBar />
      <main className="border-x border-b border-[#d9d9d9] bg-white">
        <Toolbar />
        <div className="relative">
          <Chart />
          <IndicatorsDialog />
        </div>
        <div className="flex h-[23px] items-center bg-[#f0f0f0] px-[4px]">
          <button type="button" aria-label="Scroll left">
            <Chevron className="block -rotate-90" />
          </button>
          <div className="flex h-full flex-1 justify-end pr-[3px]">
            <div className="h-full w-[21px] bg-[#cdcdcd]" />
          </div>
          <button type="button" aria-label="Scroll right">
            <Chevron className="block rotate-90" />
          </button>
        </div>
      </main>
    </div>
  );
}

export default App;
